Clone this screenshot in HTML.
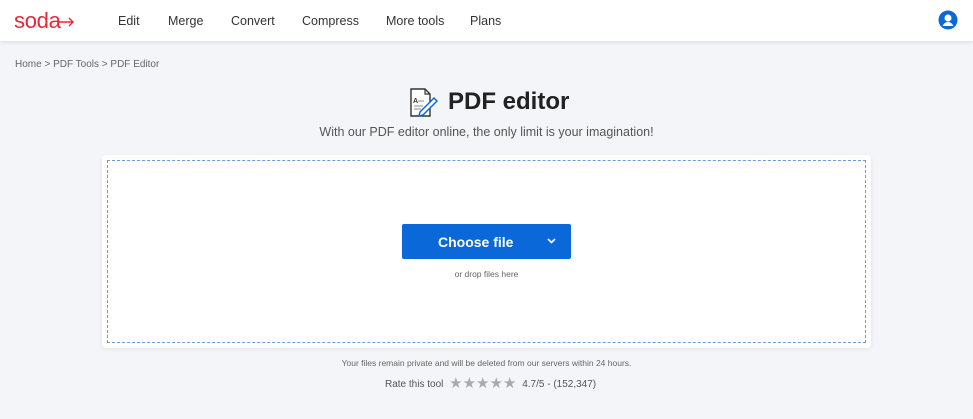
<!DOCTYPE html>
<html><head><style>
body{margin:0;width:973px;height:419px;background:#f4f5f9;font-family:"Liberation Sans",sans-serif;position:relative;overflow:hidden}
.hdr{position:absolute;left:0;top:0;width:973px;height:41px;background:#fff;box-shadow:0 1px 4px rgba(0,0,0,.12)}
.logo{position:absolute;left:14px;top:8px;font-size:22px;color:#e8273b;letter-spacing:-0.3px}
.nav{position:absolute;top:14px;font-size:12.5px;color:#333}
.bc{position:absolute;left:15px;top:59px;font-size:10px;color:#666}
h1{position:absolute;left:448px;top:88px;margin:0;font-size:24px;font-weight:bold;color:#222}
.sub{position:absolute;left:0;width:973px;text-align:center;top:125px;font-size:12.5px;color:#555}
.box{position:absolute;left:102px;top:155px;width:769px;height:193px;background:#fff;border-radius:4px;box-shadow:0 1px 4px rgba(0,0,0,.08)}
.inner{position:absolute;left:5px;top:5px;right:5px;bottom:5px;border:1px dashed #6a9be0}
.btn{position:absolute;left:402px;top:224px;width:169px;height:35px;background:#0b68d9;border-radius:2px;color:#fff;font-size:14px;font-weight:bold}
.small{position:absolute;width:973px;text-align:center;font-size:8.5px;color:#666}
</style></head><body>
<div class="hdr">
<div class="logo">soda<svg width="16" height="12" viewBox="0 0 16 12" style="margin-left:-2px"><path d="M0 6H14M10 2L14 6L10 10" stroke="#e8273b" stroke-width="1.4" fill="none"/></svg></div>
<div class="nav" style="left:118px">Edit</div>
<div class="nav" style="left:168px">Merge</div>
<div class="nav" style="left:231px">Convert</div>
<div class="nav" style="left:302px">Compress</div>
<div class="nav" style="left:386px">More tools</div>
<div class="nav" style="left:470px">Plans</div>
<svg style="position:absolute;left:938px;top:10px" width="20" height="20" viewBox="0 0 20 20"><circle cx="10" cy="10" r="9.5" fill="#0b68d9"/><circle cx="10" cy="8" r="3.5" fill="#fff"/><path d="M4.5 16c1.5-3 3.5-4 5.5-4s4 1 5.5 4" fill="#fff"/></svg>
</div>
<div class="bc">Home &gt; PDF Tools &gt; PDF Editor</div>
<svg style="position:absolute;left:406px;top:87px" width="32" height="32" viewBox="0 0 32 32"><path d="M5 2H19L24 7V29H5Z" fill="#fff" stroke="#333" stroke-width="1.4"/><path d="M19 2V7H24" fill="none" stroke="#333" stroke-width="1.2"/><text x="7" y="16" font-size="7" font-weight="bold" fill="#333" font-family="Liberation Sans">A</text><path d="M8 19H17M8 22H15M12 14H18" stroke="#888" stroke-width="1"/><path d="M14 25L28 11L31 14L17 28L13 29Z" fill="#fff" stroke="#0b68d9" stroke-width="1.5"/></svg>
<h1>PDF editor</h1>
<div class="sub">With our PDF editor online, the only limit is your imagination!</div>
<div class="box"><div class="inner"></div></div>
<div class="btn"><span style="position:absolute;left:36px;top:10px">Choose file</span><svg style="position:absolute;left:145px;top:14px" width="9" height="6" viewBox="0 0 9 6"><path d="M1 1L4.5 4.5L8 1" stroke="#fff" stroke-width="1.6" fill="none"/></svg></div>
<div class="small" style="top:269px">or drop files here</div>
<div class="small" style="top:358px">Your files remain private and will be deleted from our servers within 24 hours.</div>
<div style="position:absolute;left:385px;top:377px;font-size:10px;color:#555;line-height:14px">Rate this tool <span style="color:#aaa;font-size:15px;margin-left:3px;vertical-align:-1px">★★★★★</span> <span style="margin-left:3px">4.7/5 - (152,347)</span></div>
</body></html>
